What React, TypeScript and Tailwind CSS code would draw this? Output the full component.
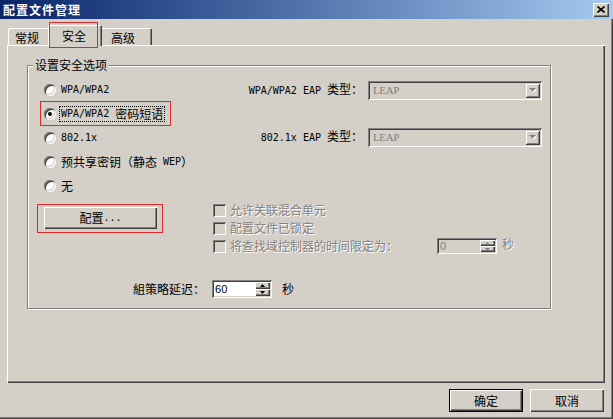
import React from "react";

const ASCII = /^[\x20-\x7e]+$/;

function Txt({ s }: { s: string }) {
  const parts = s.split(/([\x20-\x7e]+)/).filter((p) => p.length > 0);
  return (
    <>
      {parts.map((p, i) =>
        ASCII.test(p) ? (
          <span
            key={i}
            className="font-['DejaVu_Sans_Mono',monospace] text-[10px] whitespace-pre"
          >
            {p}
          </span>
        ) : (
          <span key={i}>{p}</span>
        )
      )}
    </>
  );
}

function Radio({ label, checked = false, focused = false }: { label: string; checked?: boolean; focused?: boolean }) {
  return (
    <div className="flex items-center">
      <div className="relative w-[12px] h-[12px] rounded-full bg-white shadow-[inset_1px_1px_0_#808080,inset_-1px_-1px_0_#ffffff,inset_2px_2px_0_#404040,inset_-2px_-2px_0_#d4d0c8] flex items-center justify-center">
        {checked && <div className="w-[4px] h-[4px] rounded-full bg-black" />}
      </div>
      <span
        className={
          focused
            ? "ml-[3px] px-[1px] h-[16px] flex items-center border border-dotted border-black"
            : "ml-[3px] px-[1px] h-[16px] flex items-center border border-transparent"
        }
      >
        <Txt s={label} />
      </span>
    </div>
  );
}

function Combo() {
  return (
    <div className="w-[174px] h-[19px] bg-[#d4d0c8] shadow-[inset_1px_1px_0_#808080,inset_-1px_-1px_0_#ffffff,inset_2px_2px_0_#404040,inset_-2px_-2px_0_#d4d0c8] flex items-center p-[2px]">
      <span className="flex-1 pl-[3px] font-['Liberation_Serif',serif] text-[11px] tracking-[-0.4px] leading-[13px] text-[#808080]">
        LEAP
      </span>
      <div className="w-[15px] h-[15px] bg-[#d4d0c8] shadow-[inset_1px_1px_0_#d4d0c8,inset_-1px_-1px_0_#404040,inset_2px_2px_0_#ffffff,inset_-2px_-2px_0_#808080] flex items-center justify-center">
        <svg width="7" height="5" viewBox="0 0 7 5">
          <polygon points="1,1 8,1 4.5,4.5" fill="#ffffff" />
          <polygon points="0,0 7,0 3.5,3.5" fill="#808080" />
        </svg>
      </div>
    </div>
  );
}

function SpinBtn({ up, disabled }: { up: boolean; disabled: boolean }) {
  return (
    <div className="flex-1 bg-[#d4d0c8] shadow-[inset_1px_1px_0_#ffffff,inset_-1px_-1px_0_#404040,inset_-2px_-2px_0_#808080] flex items-center justify-center">
      <svg width="5" height="3" viewBox="0 0 5 3">
        {up ? (
          <polygon points="0,3 5,3 2.5,0" fill={disabled ? "#808080" : "#000000"} />
        ) : (
          <polygon points="0,0 5,0 2.5,3" fill={disabled ? "#808080" : "#000000"} />
        )}
      </svg>
    </div>
  );
}

function Spin({ value, disabled }: { value: string; disabled: boolean }) {
  return (
    <div
      className={
        disabled
          ? "w-[60px] h-[16px] flex p-[2px] bg-[#d4d0c8] shadow-[inset_1px_1px_0_#808080,inset_-1px_-1px_0_#ffffff,inset_2px_2px_0_#404040,inset_-2px_-2px_0_#d4d0c8]"
          : "w-[60px] h-[18px] flex p-[2px] bg-white shadow-[inset_1px_1px_0_#808080,inset_-1px_-1px_0_#ffffff,inset_2px_2px_0_#404040,inset_-2px_-2px_0_#d4d0c8]"
      }
    >
      <span
        className={
          disabled
            ? "flex-1 pl-[1px] flex items-center font-['Liberation_Sans',sans-serif] text-[11px] leading-[12px] text-[#808080]"
            : "flex-1 pl-[1px] flex items-center font-['Liberation_Sans',sans-serif] text-[11px] leading-[12px] text-black"
        }
      >
        {value}
      </span>
      <div className="w-[15px] flex flex-col">
        <SpinBtn up={true} disabled={disabled} />
        <SpinBtn up={false} disabled={disabled} />
      </div>
    </div>
  );
}

function Check({ label, children }: { label: string; children?: React.ReactNode }) {
  return (
    <div className="flex items-center h-[18px]">
      <div className="w-[13px] h-[13px] bg-[#d4d0c8] shadow-[inset_1px_1px_0_#808080,inset_-1px_-1px_0_#ffffff,inset_2px_2px_0_#404040,inset_-2px_-2px_0_#d4d0c8]" />
      <span className="ml-[4px] text-[#808080] [text-shadow:1px_1px_0_#ffffff]">{label}</span>
      {children}
    </div>
  );
}

export default function App() {
  return (
    <div className="relative w-[613px] h-[419px] overflow-hidden bg-[#d4d0c8] text-[12px] leading-[14px] text-black font-['Noto_Sans_CJK_SC','Noto_Sans',sans-serif] shadow-[inset_-1px_-1px_0_#404040,inset_-2px_-2px_0_#808080] flex flex-col">
      {/* Title bar */}
      <div className="h-[19px] flex items-center justify-between bg-linear-to-r from-[#0a246a] to-[#a6caf0] pl-[3px] pr-[4px]">
        <span className="text-white font-bold tracking-[1px]">配置文件管理</span>
        <div className="w-[16px] h-[14px] bg-[#d4d0c8] shadow-[inset_1px_1px_0_#ffffff,inset_-1px_-1px_0_#404040,inset_-2px_-2px_0_#808080] flex items-center justify-center">
          <svg width="8" height="7" viewBox="0 0 8 7">
            <path d="M0.5 0.5 L7.5 6.5 M7.5 0.5 L0.5 6.5" stroke="#000" strokeWidth="1.6" />
          </svg>
        </div>
      </div>

      {/* Tabs */}
      <div className="h-[26px] flex items-end pl-[8px] relative z-10">
        <div className="w-[42px] h-[17px] rounded-t-[2px] pl-[7px] pt-[2px] flex items-center shadow-[inset_1px_1px_0_#ffffff,inset_-1px_0_0_#404040,inset_-2px_0_0_#808080]">
          常规
        </div>
        <div className="relative z-10 -ml-[2px] -mb-[1px] w-[54px] h-[21px] rounded-t-[2px] pl-[14px] flex items-center bg-[#d4d0c8] shadow-[inset_1px_1px_0_#ffffff,inset_-1px_0_0_#404040,inset_-2px_0_0_#808080]">
          安全
        </div>
        <div className="-ml-[2px] w-[52px] h-[17px] rounded-t-[2px] pl-[11px] pt-[2px] flex items-center shadow-[inset_1px_1px_0_#ffffff,inset_-1px_0_0_#404040,inset_-2px_0_0_#808080]">
          高级
        </div>
      </div>

      {/* Tab panel */}
      <div className="ml-[7px] w-[598px] h-[338px] pt-[20px] pl-[20px] shadow-[inset_1px_1px_0_#ffffff,inset_-1px_-1px_0_#404040,inset_-2px_-2px_0_#808080]">
        <div className="relative w-[524px] h-[244px] border border-[#808080] shadow-[inset_1px_1px_0_#ffffff,1px_1px_0_#ffffff] pt-[12px] pl-[16px] pr-[8px] flex flex-col">
          <span className="absolute -top-[8px] left-[5px] px-[2px] bg-[#d4d0c8]">设置安全选项</span>

          <div className="flex items-center h-[24px]">
            <Radio label="WPA/WPA2" />
            <div className="ml-auto flex items-center">
              <span className="mr-[5px]">
                <Txt s="WPA/WPA2 EAP 类型：" />
              </span>
              <Combo />
            </div>
          </div>
          <div className="flex items-center h-[24px]">
            <Radio label="WPA/WPA2 密码短语" checked focused />
          </div>
          <div className="flex items-center h-[24px]">
            <Radio label="802.1x" />
            <div className="ml-auto flex items-center -mt-[2px]">
              <span className="mr-[5px]">
                <Txt s="802.1x EAP 类型：" />
              </span>
              <Combo />
            </div>
          </div>
          <div className="flex items-center h-[24px]">
            <Radio label="预共享密钥（静态 WEP）" />
          </div>
          <div className="flex items-center h-[24px]">
            <Radio label="无" />
          </div>

          <div className="flex mt-[3px]">
            <div className="w-[169px] pt-[6px]">
              <div className="w-[113px] h-[22px] flex items-center justify-center bg-[#d4d0c8] shadow-[inset_1px_1px_0_#ffffff,inset_-1px_-1px_0_#404040,inset_-2px_-2px_0_#808080]">
                <Txt s="配置..." />
              </div>
            </div>
            <div className="flex flex-col">
              <Check label="允许关联混合单元" />
              <Check label="配置文件已锁定" />
              <div className="flex items-center h-[18px]">
                <div className="w-[13px] h-[13px] bg-[#d4d0c8] shadow-[inset_1px_1px_0_#808080,inset_-1px_-1px_0_#ffffff,inset_2px_2px_0_#404040,inset_-2px_-2px_0_#d4d0c8]" />
                <span className="ml-[4px] w-[207px] text-[#808080] [text-shadow:1px_1px_0_#ffffff]">
                  将查找域控制器的时间限定为：
                </span>
                <Spin value="0" disabled={true} />
                <span className="ml-[5px] -mt-[4px] text-[#808080] [text-shadow:1px_1px_0_#ffffff]">秒</span>
              </div>
            </div>
          </div>

          <div className="flex items-center h-[18px] mt-[25px] pl-[89px]">
            <span>組策略延迟：</span>
            <div className="ml-[7px]">
              <Spin value="60" disabled={false} />
            </div>
            <span className="ml-[10px]">秒</span>
          </div>
        </div>
      </div>

      {/* Bottom buttons */}
      <div className="flex justify-end gap-[7px] pr-[9px] mt-[6px]">
        <div className="w-[74px] h-[23px] flex items-center justify-center border border-black bg-[#d4d0c8] shadow-[inset_1px_1px_0_#ffffff,inset_-1px_-1px_0_#404040,inset_-2px_-2px_0_#808080]">
          确定
        </div>
        <div className="w-[74px] h-[23px] flex items-center justify-center bg-[#d4d0c8] shadow-[inset_1px_1px_0_#ffffff,inset_-1px_-1px_0_#404040,inset_-2px_-2px_0_#808080]">
          取消
        </div>
      </div>

      {/* Red annotation boxes */}
      <div className="absolute left-[49px] top-[22px] w-[49px] h-[26px] border border-[#e0282d] z-20 pointer-events-none" />
      <div className="absolute left-[40px] top-[101px] w-[131px] h-[25px] border border-[#e0282d] z-20 pointer-events-none" />
      <div className="absolute left-[37px] top-[204px] w-[126px] h-[29px] border border-[#e0282d] z-20 pointer-events-none" />
    </div>
  );
}
